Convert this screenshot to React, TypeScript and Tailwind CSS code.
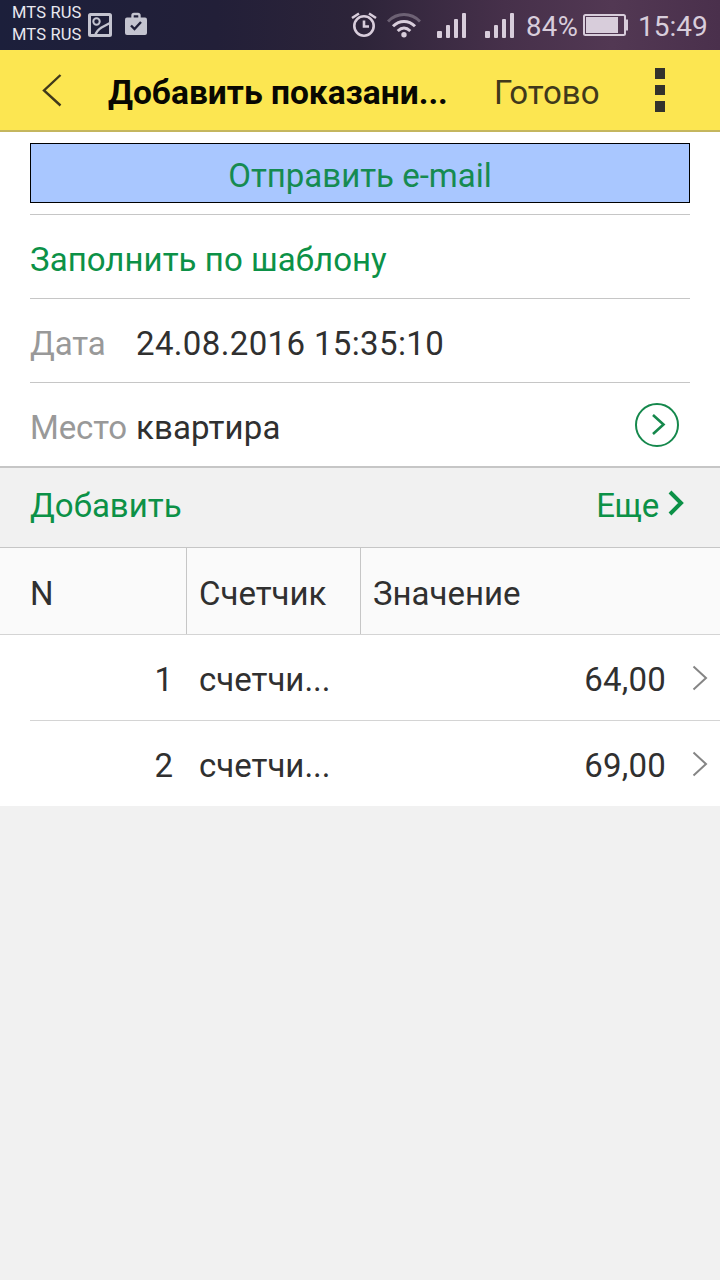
import type { ReactNode } from "react";

const rows = [
  { n: 1, meter: "счетчи...", value: "64,00" },
  { n: 2, meter: "счетчи...", value: "69,00" },
];

function SignalBars() {
  return (
    <svg width="30" height="26" viewBox="0 0 30 26" fill="currentColor">
      <rect x="0" y="18" width="5" height="7" rx="1" />
      <rect x="9" y="12" width="4" height="13" rx="1" />
      <rect x="17" y="6" width="4" height="19" rx="1" />
      <rect x="25" y="0" width="4" height="25" rx="1" />
    </svg>
  );
}

function StatusBar() {
  return (
    <div className="flex h-[50px] items-start bg-[linear-gradient(90deg,#1c1f3b_0%,#221f38_30%,#2d2439_50%,#46304a_70%,#523853_85%,#4a304c_100%)] text-[#d8cddb]">
      <div className="ml-3 mt-[2px] w-[76px] whitespace-nowrap text-[16.5px] leading-[22px] tracking-[0.15px] text-[#e9e8f0]">
        <div>MTS RUS</div>
        <div>MTS RUS</div>
      </div>
      <svg className="mt-[13px] text-[#c4c4d0]" width="24" height="24" viewBox="0 0 24 24" fill="none" stroke="currentColor">
        <rect x="1.5" y="1.5" width="21" height="21" rx="1" strokeWidth="3" />
        <circle cx="8.500" cy="8.500" r="3.200" strokeWidth="2" />
        <path d="M7.500 22c.8-4 3-5.500 6-7.500 3.500-2 5-2.500 8.500-4.500" strokeWidth="2.400" />
      </svg>
      <svg className="ml-[12px] mt-[12px] text-[#c4c4d0]" width="24" height="24" viewBox="0 0 24 24">
        <path d="M8.500 6V3.500a1.500 1.500 0 0 1 1.500-1.500h4a1.500 1.500 0 0 1 1.500 1.500V6" fill="none" stroke="currentColor" strokeWidth="2.400" />
        <rect x="1" y="5.500" width="22" height="17.500" rx="2" fill="currentColor" />
        <path d="M7 13.500l3.500 3.500 6.500-7" fill="none" stroke="#20203a" strokeWidth="2.400" />
      </svg>
      <svg className="ml-[203px] mt-[12px]" width="26" height="26" viewBox="0 0 26 26" fill="none" stroke="currentColor" strokeWidth="2.600">
        <circle cx="13" cy="14" r="9.700" />
        <path d="M13 8.500v6h5M1 6L8 1.500M25 6L18 1.500" />
      </svg>
      <svg className="ml-[10px] mt-[12px]" width="34" height="27" viewBox="0 0 34 27" fill="none" stroke="currentColor" strokeWidth="3">
        <path d="M1 9.500C10 .2 24 .2 33 9.500" opacity="0.350" />
        <path d="M6 14.300c6.500-6.500 15.500-6.500 22 0M10.700 19c4-3.800 8.600-3.800 12.600 0" />
        <circle cx="17" cy="22.800" r="2.700" fill="currentColor" stroke="none" />
      </svg>
      <div className="ml-[16px] mt-[13px]"><SignalBars /></div>
      <div className="ml-[18px] mt-[13px]"><SignalBars /></div>
      <span className="ml-[11px] mt-[11px] w-[57px] whitespace-nowrap text-[27.500px] leading-8 tracking-[0.4px]">84%</span>
      <svg className="mt-[14px]" width="45" height="22" viewBox="0 0 45 22" fill="none" stroke="currentColor">
        <rect x="1" y="1" width="41" height="20" rx="1.500" strokeWidth="2" />
        <path d="M3 3h32v16H3z" fill="currentColor" stroke="none" />
        <path d="M43.500 5.500v11" strokeWidth="3" />
      </svg>
      <span className="ml-[10px] mt-[11px] whitespace-nowrap text-[28px] leading-8">15:49</span>
    </div>
  );
}

function Header() {
  return (
    <header className="flex h-[82px] items-center border-b-2 border-[#c4b65e] bg-[#fce651]">
      <svg className="ml-[42px]" width="20" height="34" viewBox="0 0 20 34" fill="none" stroke="#40391b" strokeWidth="2.400">
        <path d="M18.500 2L2 17.500l16.500 15" />
      </svg>
      <h1 className="ml-[46px] w-[386px] whitespace-nowrap pt-[6px] text-[33.500px] font-bold leading-10 text-[#080802]">Добавить показани...</h1>
      <button className="w-[161px] whitespace-nowrap pt-[6px] text-left leading-10 text-[#40391b]">Готово</button>
      <div className="flex flex-col gap-[6px]">
        <i className="h-[11px] w-[10px] bg-[#33332b]" />
        <i className="h-[10px] w-[10px] bg-[#33332b]" />
        <i className="h-[11px] w-[10px] bg-[#33332b]" />
      </div>
    </header>
  );
}

function Field({ label, children, last }: { label: string; children: ReactNode; last?: boolean }) {
  return (
    <div className={last ? "flex h-[83px] items-center px-[30px]" : "mx-[30px] flex h-[84px] items-center border-b border-[#c6c6c6]"}>
      <span className="w-[106px] whitespace-nowrap pt-[7px] tracking-[-0.15px] text-[#999]">{label}</span>
      {children}
    </div>
  );
}

export default function App() {
  return (
    <div className="flex h-[1280px] w-[720px] flex-col overflow-hidden bg-[#f1f1f1] font-[Roboto,sans-serif] text-[33px] leading-10 text-[#303030]">
      <StatusBar />
      <Header />
      <main>
        <section className="border-b-2 border-[#c6c6c6] bg-white">
          <div className="mx-[30px] h-[83px] border-b border-[#c6c6c6] pt-[11px]">
            <button className="flex h-[60px] w-full items-center justify-center border border-black bg-[#a9c7ff] pt-[6px] text-[#168b51]">Отправить e-mail</button>
          </div>
          <div className="mx-[30px] flex h-[84px] items-center border-b border-[#c6c6c6]">
            <button className="pt-[7px] tracking-[0.05px] text-[#0c9147]">Заполнить по шаблону</button>
          </div>
          <Field label="Дата">
            <span className="pt-[7px] tracking-[0.36px]">24.08.2016 15:35:10</span>
          </Field>
          <Field label="Место" last>
            <span className="flex-1 pt-[7px] tracking-[0.15px]">квартира</span>
            <svg className="mr-[11px]" width="44" height="44" viewBox="0 0 44 44" fill="none" stroke="#15884c">
              <circle cx="22" cy="22" r="21" strokeWidth="2" />
              <path d="M18 12l10.500 9.500L18 31" strokeWidth="2.600" />
            </svg>
          </Field>
        </section>
        <section>
          <div className="flex h-[80px] items-center justify-between border-b border-[#c6c6c6] pl-[30px] pr-[35px] text-[#0c9147]">
            <button className="pb-[3px]">Добавить</button>
            <button className="flex items-center pb-[3px]">
              <span className="tracking-[-0.3px]">Еще</span>
              <svg className="mb-[6px] ml-[9px] mr-[1px]" width="16" height="26" viewBox="0 0 16 26" fill="none" stroke="currentColor" strokeWidth="4">
                <path d="M2 2l11 11L2 24" />
              </svg>
            </button>
          </div>
          <div className="grid h-[87px] grid-cols-[187px_174px_1fr] border-b border-[#d4d4d4] bg-[#fafafa]">
            <div className="flex items-center border-r border-[#c6c6c6] pl-[30px] pt-[6px]">N</div>
            <div className="flex items-center border-r border-[#c6c6c6] pl-3 pt-[6px]">Счетчик</div>
            <div className="flex items-center pl-3 pt-[6px]">Значение</div>
          </div>
          <div className="bg-white pl-[30px]">
            {rows.map((r) => (
              <div key={r.n} className="grid h-[86px] grid-cols-[143px_26px_1fr_1fr_54px] items-center border-b border-[#d4d4d4] last:h-[85px] last:border-0">
                <span className="pt-[5px] text-right">{r.n}</span>
                <span />
                <span className="pt-[5px]">{r.meter}</span>
                <span className="pt-[5px] text-right tracking-[0.2px]">{r.value}</span>
                <svg className="ml-[26px]" width="16" height="26" viewBox="0 0 16 26" fill="none" stroke="#858585" strokeWidth="2">
                  <path d="M1.500 1.500L14 13 1.500 24.500" />
                </svg>
              </div>
            ))}
          </div>
        </section>
      </main>
    </div>
  );
}
